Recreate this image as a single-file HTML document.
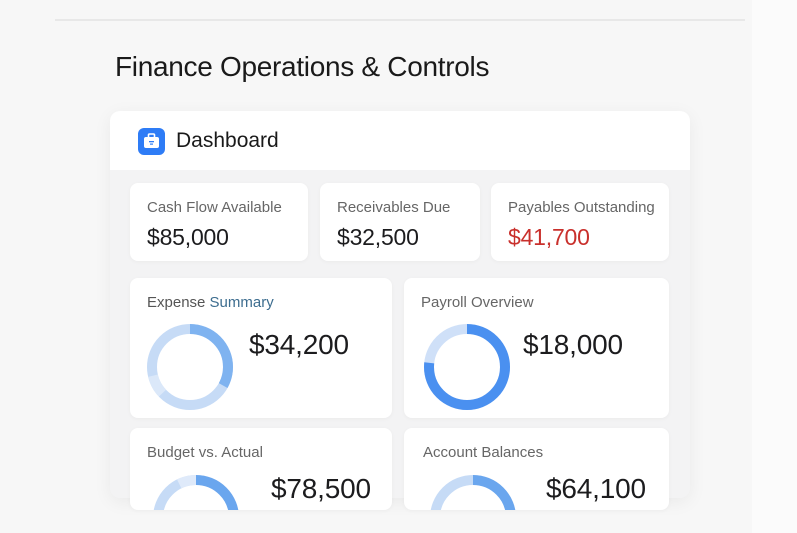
<!DOCTYPE html>
<html><head><meta charset="utf-8"><style>
*{margin:0;padding:0;box-sizing:border-box}
body{width:797px;height:533px;overflow:hidden;background:#f7f7f7;font-family:"Liberation Sans",sans-serif;position:relative;color:#1c1c1e}
.rs{position:absolute;left:752px;top:0;width:45px;height:533px;background:#fbfbfb}
.line{position:absolute;left:55px;top:19px;width:690px;height:2px;background:#e8e8e8}
h1{position:absolute;left:115px;top:51px;font-size:28px;font-weight:400;letter-spacing:-0.3px;color:#1a1a1a}
.main{position:absolute;left:110px;top:111px;width:580px;height:387px;background:#f3f3f4;border-radius:10px;box-shadow:0 4px 18px rgba(0,0,0,.06)}
.hdr{position:absolute;left:0;top:0;width:580px;height:59px;background:#fff;border-radius:10px 10px 0 0}
.icon{position:absolute;left:28px;top:17px;width:27px;height:27px;background:#2e7cf6;border-radius:6px}
.hdr span{position:absolute;left:66px;top:18px;font-size:21px;color:#1a1a1a}
.c{position:absolute;background:#fff;border-radius:8px;box-shadow:0 1px 4px rgba(0,0,0,.04);overflow:hidden}
.lb{position:absolute;left:17px;top:16px;font-size:15px;color:#666}
.v{position:absolute;left:17px;top:41px;font-size:23px;color:#1c1c1e;letter-spacing:-0.2px}
.big{position:absolute;font-size:28px;color:#1c1c1e;letter-spacing:-0.2px}
svg{position:absolute}
</style></head><body>
<div class="rs"></div>
<div class="line"></div>
<h1>Finance Operations &amp; Controls</h1>
<div class="main"><div class="hdr"><div class="icon">
<svg width="27" height="27" viewBox="0 0 27 27"><rect x="10.5" y="6" width="6" height="4" rx="1" fill="none" stroke="#fff" stroke-width="1.6"/><rect x="6" y="9" width="15" height="11" rx="2" fill="#fff"/><rect x="11" y="13" width="5" height="1.3" fill="#2e7cf6"/><rect x="12" y="15.5" width="3" height="1.2" fill="#2e7cf6"/></svg>
</div><span>Dashboard</span></div></div>

<div class="c" style="left:130px;top:183px;width:178px;height:78px"><div class="lb">Cash Flow Available</div><div class="v">$85,000</div></div>
<div class="c" style="left:320px;top:183px;width:160px;height:78px"><div class="lb">Receivables Due</div><div class="v">$32,500</div></div>
<div class="c" style="left:491px;top:183px;width:178px;height:78px"><div class="lb">Payables Outstanding</div><div class="v" style="color:#c9302c">$41,700</div></div>

<div class="c" style="left:130px;top:278px;width:262px;height:140px"><div class="lb"><span style="color:#555">Expense </span><span style="color:#3d6d8f">Summary</span></div>
<svg width="262" height="140" viewBox="0 0 262 140"><g transform="translate(60,89) rotate(-90)" fill="none" stroke-width="10">
<circle r="38" stroke="#c6dbf6"/>
<circle r="38" stroke="#7fb3f0" stroke-dasharray="79 300"/>
<circle r="38" stroke="#dbe8f9" stroke-dasharray="20 300" stroke-dashoffset="-150"/></g></svg>
<div class="big" style="left:119px;top:51px">$34,200</div></div>

<div class="c" style="left:404px;top:278px;width:265px;height:140px"><div class="lb">Payroll Overview</div>
<svg width="265" height="140" viewBox="0 0 265 140"><g transform="translate(63,89) rotate(-90)" fill="none" stroke-width="10">
<circle r="38" stroke="#cfe0f8"/>
<circle r="38" stroke="#4a90f0" stroke-dasharray="183 300"/></g></svg>
<div class="big" style="left:119px;top:51px">$18,000</div></div>

<div class="c" style="left:130px;top:428px;width:262px;height:82px"><div class="lb">Budget vs. Actual</div>
<svg width="262" height="82" viewBox="0 0 262 82"><g transform="translate(66,90) rotate(-90)" fill="none" stroke-width="10">
<circle r="38" stroke="#c6dbf6"/>
<circle r="38" stroke="#6aa6ee" stroke-dasharray="70 300"/>
<circle r="38" stroke="#dfeafa" stroke-dasharray="18 300" stroke-dashoffset="-221"/></g></svg>
<div class="big" style="left:141px;top:45px">$78,500</div></div>

<div class="c" style="left:404px;top:428px;width:265px;height:82px"><div class="lb" style="left:19px">Account Balances</div>
<svg width="265" height="82" viewBox="0 0 265 82"><g transform="translate(69,90) rotate(-90)" fill="none" stroke-width="10">
<circle r="38" stroke="#c6dbf6"/>
<circle r="38" stroke="#6aa6ee" stroke-dasharray="72 300"/></g></svg>
<div class="big" style="left:142px;top:45px">$64,100</div></div>
</body></html>
